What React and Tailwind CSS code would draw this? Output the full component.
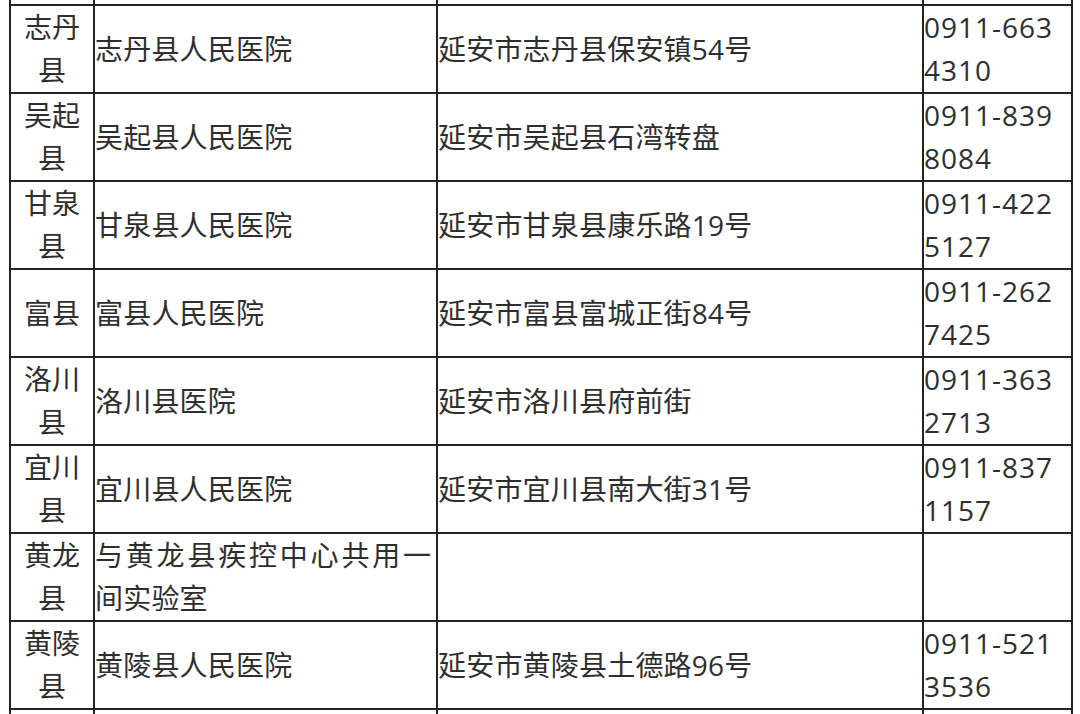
import React from "react";

const rows = [
  ["志丹县", "志丹县人民医院", "延安市志丹县保安镇54号", ["0911-663", "4310"]],
  ["吴起县", "吴起县人民医院", "延安市吴起县石湾转盘", ["0911-839", "8084"]],
  ["甘泉县", "甘泉县人民医院", "延安市甘泉县康乐路19号", ["0911-422", "5127"]],
  ["富县", "富县人民医院", "延安市富县富城正街84号", ["0911-262", "7425"]],
  ["洛川县", "洛川县医院", "延安市洛川县府前街", ["0911-363", "2713"]],
  ["宜川县", "宜川县人民医院", "延安市宜川县南大街31号", ["0911-837", "1157"]],
  ["黄龙县", ["与黄龙县疾控中心共用一", "间实验室"], "", null],
  ["黄陵县", "黄陵县人民医院", "延安市黄陵县土德路96号", ["0911-521", "3536"]],
];

const cell = "border-2 border-[#222] p-0 align-middle";

export default function App() {
  return (
    <div
      className="w-[1080px] h-[714px] overflow-hidden bg-white text-[#2e2e2e] text-[28px] leading-[43px]"
      style={{ fontFamily: '"Open Sans", "Noto Sans CJK SC", sans-serif' }}
    >
      <table className="ml-[9px] border-collapse table-fixed w-[1062px]">
        <colgroup>
          <col className="w-[84px]" />
          <col className="w-[343px]" />
          <col className="w-[486px]" />
          <col className="w-[149px]" />
        </colgroup>
        <tbody>
          <tr className="h-[5px]">
            <td className="border-2 border-t-0 border-[#222] p-0"></td>
            <td className="border-2 border-t-0 border-[#222] p-0"></td>
            <td className="border-2 border-t-0 border-[#222] p-0"></td>
            <td className="border-2 border-t-0 border-[#222] p-0"></td>
          </tr>
          {rows.map((r, i) => (
            <tr key={i} className="h-[88px]">
              <td className={cell + " text-center px-[12px]"}>{r[0]}</td>
              <td className={cell + " tracking-[0.2px]"}>
                {Array.isArray(r[1]) ? (
                  <>
                    <div className="tracking-[2.8px]">{r[1][0]}</div>
                    <div>{r[1][1]}</div>
                  </>
                ) : (
                  r[1]
                )}
              </td>
              <td className={cell + " tracking-[0.2px]"}>{r[2]}</td>
              <td className={cell + " tracking-[1px]"}>
                {r[3] && (
                  <>
                    <div>{r[3][0]}</div>
                    <div>{r[3][1]}</div>
                  </>
                )}
              </td>
            </tr>
          ))}
          <tr className="h-[40px]">
            <td className={cell}></td>
            <td className={cell}></td>
            <td className={cell}></td>
            <td className={cell}></td>
          </tr>
        </tbody>
      </table>
    </div>
  );
}
